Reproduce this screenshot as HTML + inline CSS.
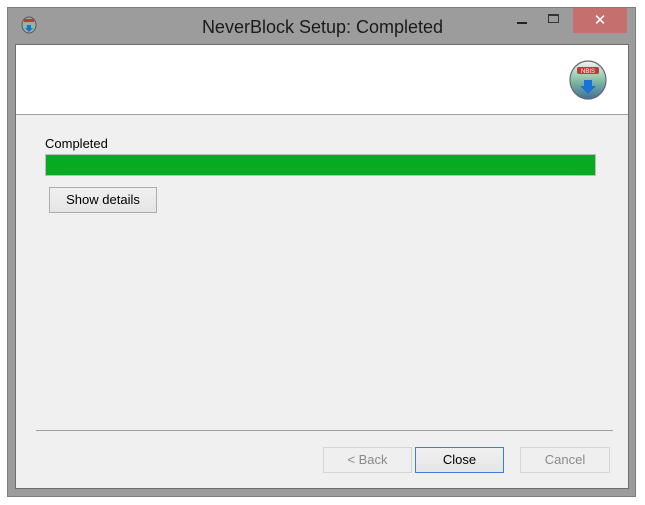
<!DOCTYPE html>
<html><head><style>
body{margin:0;width:645px;height:505px;background:#fff;position:relative;font-family:"Liberation Sans",sans-serif;overflow:hidden}
.a{position:absolute;box-sizing:border-box}
.frame{left:7px;top:7px;width:629px;height:490px;background:#9c9c9c;border:1px solid #7d7d7d}
.client{left:15px;top:44px;width:614px;height:445px;background:#f0f0f0;border:1px solid #6e6e6e}
.btn{background:linear-gradient(#f0f0f0,#e5e5e5);border:1px solid #acacac;font-size:13px;text-align:center;line-height:24px;color:#000}
.dis{background:#efefef;border-color:#d5d5d5;color:#8a8a8a}
</style></head><body>
<div class="a frame"></div>
<div class="a" style="left:573px;top:8px;width:54px;height:25px;background:#c5706f"></div>
<div class="a" style="left:573px;top:8px;width:54px;height:25px;color:#fff;font-size:15px;text-align:center;line-height:25px">✕</div>
<div class="a" style="left:517px;top:22px;width:10px;height:2px;background:#222"></div>
<div class="a" style="left:548px;top:14px;width:11px;height:9px;border:1px solid #333;border-top-width:2px"></div>
<div class="a" style="left:0;top:17px;width:645px;text-align:center;font-size:18px;color:#1a1a1a">NeverBlock Setup: Completed</div>
<svg class="a" style="left:21px;top:16px" width="16" height="18" viewBox="0 0 16 18"><ellipse cx="8" cy="9" rx="7" ry="8" fill="#8fb6a0" stroke="#556" stroke-width="1"/><rect x="3" y="3" width="10" height="3" fill="#c33"/><path d="M6 9h4v3h2l-4 4-4-4h2z" fill="#1a6fd0"/></svg>
<div class="a client"></div>
<div class="a" style="left:16px;top:45px;width:612px;height:70px;background:#fff;border-bottom:1px solid #a0a0a0"></div>
<svg class="a" style="left:569px;top:60px" width="38" height="40" viewBox="0 0 38 40"><defs><linearGradient id="g" x1="0" y1="0" x2="0" y2="1"><stop offset="0" stop-color="#f4f4f4"/><stop offset=".45" stop-color="#8ec7a8"/><stop offset="1" stop-color="#3d6f93"/></linearGradient></defs><ellipse cx="19" cy="20" rx="18" ry="19" fill="url(#g)" stroke="#667" stroke-width="1.2"/><rect x="8" y="7" width="22" height="7" rx="2" fill="#c7363a"/><text x="19" y="13" font-size="6" fill="#fff" text-anchor="middle" font-family="Liberation Sans">NBIS</text><path d="M15 20h8v6h4l-8 8-8-8h4z" fill="#1a72d6"/></svg>
<div class="a" style="left:45px;top:136px;font-size:13px;color:#000">Completed</div>
<div class="a" style="left:45px;top:154px;width:551px;height:22px;background:#06ab22;border:1px solid #bcbcbc"></div>
<div class="a btn" style="left:49px;top:187px;width:108px;height:26px">Show details</div>
<div class="a" style="left:36px;top:430px;width:577px;height:1px;background:#a0a0a0"></div>
<div class="a btn dis" style="left:323px;top:447px;width:89px;height:26px">&lt; Back</div>
<div class="a btn" style="left:415px;top:447px;width:89px;height:26px;border-color:#3c7fd8">Close</div>
<div class="a btn dis" style="left:520px;top:447px;width:90px;height:26px">Cancel</div>
</body></html>
